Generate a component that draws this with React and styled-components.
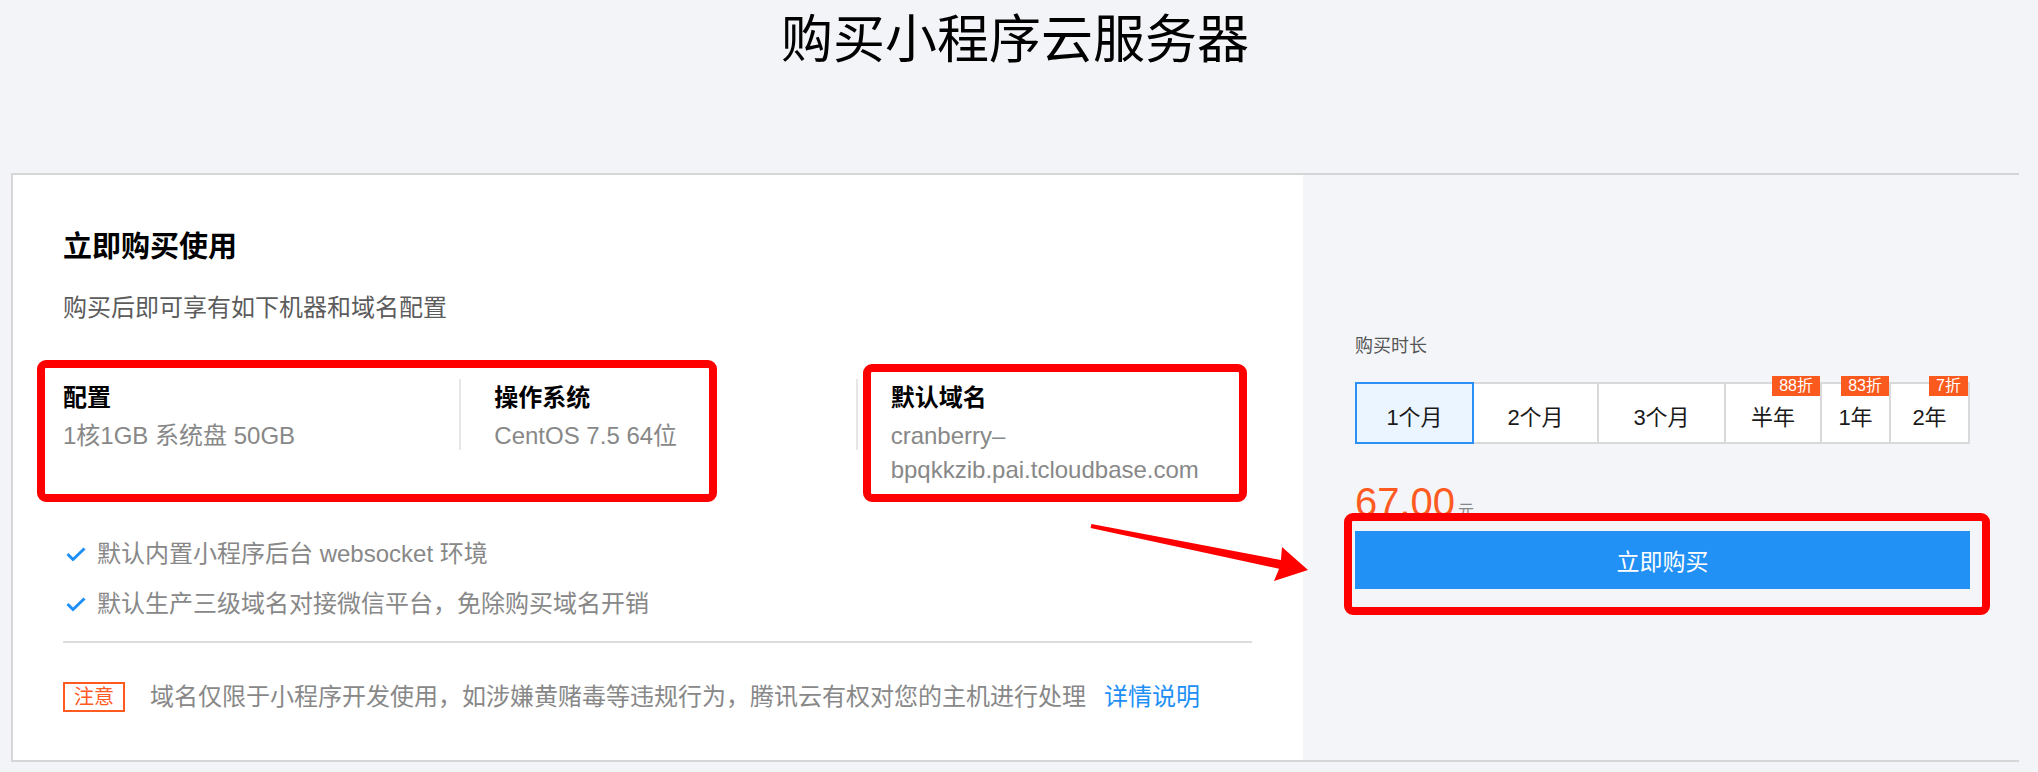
import React from 'react';
import styled, { createGlobalStyle } from 'styled-components';

const GlobalStyle = createGlobalStyle`
	html, body {
		margin: 0;
		padding: 0;
		background: #f3f4f8;
	}
	body {
		font-family: 'Liberation Sans', 'Noto Sans CJK SC', sans-serif;
		color: #000;
	}
`;

const Page = styled.div`
	width: 2038px;
	height: 772px;
	box-sizing: border-box;
	padding: 4px 19px 0 11px;
	overflow: hidden;
`;

const Title = styled.h1`
	margin: 0;
	font-size: 52px;
	font-weight: 400;
	line-height: 72px;
	text-align: center;
`;

const Card = styled.div`
	position: relative;
	margin-top: 97px;
	height: 589px;
	box-sizing: border-box;
	border: 2px solid #d6d6d6;
	display: grid;
	grid-template-columns: 1290px 1fr;
`;

const LeftPanel = styled.div`
	background: #fff;
	padding: 52px 51px 0 50px;
`;

const Heading = styled.h2`
	margin: 0;
	font-size: 29px;
	font-weight: 700;
	line-height: 40px;
`;

const Subtitle = styled.p`
	margin: 24px 0 0;
	font-size: 24px;
	line-height: 34px;
	color: #5c5c5c;
`;

const ConfigRow = styled.div`
	position: relative;
	margin-top: 54px;
	display: grid;
	grid-template-columns: repeat(3, 1fr);
`;

const ConfigItem = styled.div`
	position: relative;
	padding: 2px 0 0 ${(p) => (p.$first ? '0' : '35px')};

	&::before {
		content: '';
		display: ${(p) => (p.$first ? 'none' : 'block')};
		position: absolute;
		left: 0;
		top: 0;
		width: 2px;
		height: 71px;
		background: #e6e6e6;
	}
`;

const ItemTitle = styled.div`
	font-size: 24px;
	font-weight: 700;
	line-height: 34px;
`;

const ItemValue = styled.div`
	margin-top: 4px;
	font-size: 24px;
	line-height: 34px;
	color: #888;
`;

const Mark = styled.div`
	position: absolute;
	left: ${(p) => p.$left}px;
	top: ${(p) => p.$top}px;
	width: ${(p) => p.$width}px;
	height: ${(p) => p.$height}px;
	box-sizing: border-box;
	border: 8px solid #ff0000;
	border-radius: 9px;
	z-index: 2;
	pointer-events: none;
`;

const CheckList = styled.ul`
	margin: 50px 0 0;
	padding: 0;
	list-style: none;
	display: flex;
	flex-direction: column;
	gap: 16px;
`;

const CheckItem = styled.li`
	display: flex;
	align-items: center;
	gap: 11px;
	padding-left: 3px;
	font-size: 24px;
	line-height: 34px;
	color: #888;
`;

const Divider = styled.hr`
	margin: 20px 0 0;
	border: 0;
	height: 2px;
	background: #dcdcdc;
`;

const Notice = styled.div`
	margin-top: 37px;
	display: flex;
	align-items: center;
	font-size: 24px;
	line-height: 34px;
	color: #888;
`;

const NoticeTag = styled.span`
	border: 2px solid #ff5a1f;
	color: #ff5a1f;
	font-size: 20px;
	line-height: 26px;
	padding: 0 9px;
	margin-right: 25px;
`;

const Link = styled.a`
	margin-left: 18px;
	color: #1e8ff5;
	text-decoration: none;
`;

const RightPanel = styled.div`
	background: #f4f5f9;
	padding: 158px 50px 0 52px;
`;

const Label = styled.div`
	font-size: 18px;
	line-height: 26px;
	color: #555;
`;

const Tabs = styled.div`
	margin-top: 23px;
	display: flex;
`;

const Tab = styled.div`
	position: relative;
	width: ${(p) => p.$width}px;
	height: 62px;
	box-sizing: border-box;
	margin-left: -2px;
	padding-top: 3px;
	border: 2px solid ${(p) => (p.$active ? '#2b8ff5' : '#d9d9d9')};
	background: ${(p) => (p.$active ? '#eaf5ff' : '#fff')};
	z-index: ${(p) => (p.$active ? 1 : 0)};
	display: flex;
	align-items: center;
	justify-content: center;
	font-size: 22px;
	color: #1a1a1a;

	&:first-child {
		margin-left: 0;
	}
`;

const Badge = styled.span`
	position: absolute;
	top: -8px;
	right: 0;
	height: 20px;
	padding: 0 7px;
	background: #fa5a1e;
	color: #fff;
	font-size: 16px;
	line-height: 20px;
`;

const Price = styled.div`
	margin-top: 34px;
	height: 48px;
	font-size: 40px;
	line-height: 48px;
	color: #ff5a1f;
`;

const Unit = styled.span`
	margin-left: 3px;
	font-size: 16px;
	line-height: 1;
	color: #888;
`;

const BuyWrap = styled.div`
	position: relative;
	margin-top: 5px;
`;

const BuyButton = styled.button`
	display: block;
	width: 100%;
	height: 58px;
	border: 0;
	background: #2291f6;
	color: #fff;
	font-family: inherit;
	font-size: 23px;
	cursor: pointer;
`;

const Arrow = styled.svg`
	position: absolute;
	left: 1072px;
	top: 345px;
	z-index: 3;
	pointer-events: none;
`;

const periods = [
	{ label: '1个月', width: 119, active: true },
	{ label: '2个月', width: 127 },
	{ label: '3个月', width: 129 },
	{ label: '半年', width: 98, badge: '88折' },
	{ label: '1年', width: 71, badge: '83折' },
	{ label: '2年', width: 81, badge: '7折' }
];

const features = ['默认内置小程序后台 websocket 环境', '默认生产三级域名对接微信平台，免除购买域名开销'];

const Check = () => (
	<svg width="20" height="15" viewBox="0 0 20 15">
		<polyline points="1.5,7 7,12.5 18.5,1.5" fill="none" stroke="#1e8ff5" strokeWidth="3" />
	</svg>
);

export default function App() {
	return (
		<Page>
			<GlobalStyle />
			<Title>购买小程序云服务器</Title>
			<Card>
				<LeftPanel>
					<Heading>立即购买使用</Heading>
					<Subtitle>购买后即可享有如下机器和域名配置</Subtitle>
					<ConfigRow>
						<ConfigItem $first>
							<ItemTitle>配置</ItemTitle>
							<ItemValue>1核1GB 系统盘 50GB</ItemValue>
						</ConfigItem>
						<ConfigItem>
							<ItemTitle>操作系统</ItemTitle>
							<ItemValue>CentOS 7.5 64位</ItemValue>
						</ConfigItem>
						<ConfigItem>
							<ItemTitle>默认域名</ItemTitle>
							<ItemValue>
								cranberry–
								<wbr />
								bpqkkzib.pai.tcloudbase.com
							</ItemValue>
						</ConfigItem>
						<Mark $left={-26} $top={-19} $width={680} $height={142} />
						<Mark $left={800} $top={-15} $width={384} $height={138} />
					</ConfigRow>
					<CheckList>
						{features.map((text) => (
							<CheckItem key={text}>
								<Check />
								{text}
							</CheckItem>
						))}
					</CheckList>
					<Divider />
					<Notice>
						<NoticeTag>注意</NoticeTag>
						域名仅限于小程序开发使用，如涉嫌黄赌毒等违规行为，腾讯云有权对您的主机进行处理
						<Link href="#">详情说明</Link>
					</Notice>
				</LeftPanel>
				<RightPanel>
					<Label>购买时长</Label>
					<Tabs>
						{periods.map((p) => (
							<Tab key={p.label} $width={p.width} $active={p.active}>
								{p.label}
								{p.badge && <Badge>{p.badge}</Badge>}
							</Tab>
						))}
					</Tabs>
					<Price>
						67.00<Unit>元</Unit>
					</Price>
					<BuyWrap>
						<BuyButton>立即购买</BuyButton>
						<Mark $left={-11} $top={-18} $width={646} $height={102} />
					</BuyWrap>
				</RightPanel>
				<Arrow width="230" height="66" viewBox="0 0 230 66">
					<polygon
						points="6.4,4 195.9,40 197,27 223,50 189,61 194.1,48.8 5.6,8"
						fill="#ff0000"
					/>
				</Arrow>
			</Card>
		</Page>
	);
}
